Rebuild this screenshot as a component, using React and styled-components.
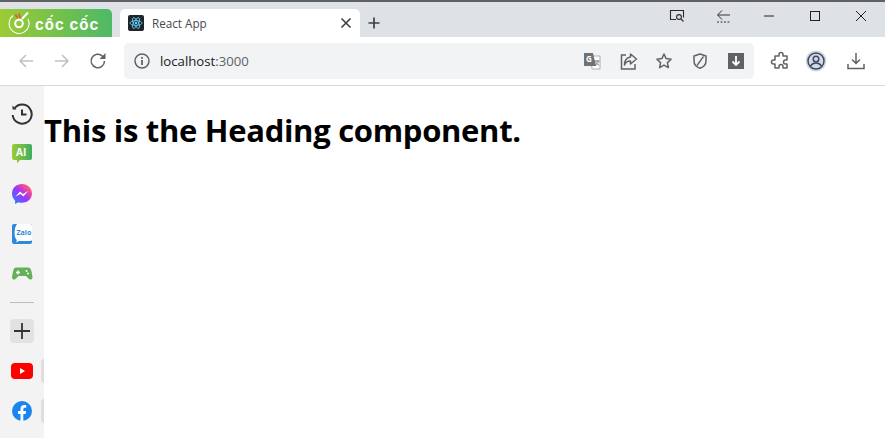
import React from "react";
import styled, { createGlobalStyle } from "styled-components";

const Global = createGlobalStyle`
  html, body { margin: 0; padding: 0; background: #fff; overflow: hidden; }
  * { box-sizing: border-box; }
`;
const Win = styled.div`
  width: 885px; height: 438px; display: flex; flex-direction: column; overflow: hidden;
  font-family: "Open Sans", "Noto Sans", sans-serif; background: #fff;
`;
const TitleBar = styled.div`
  height: 37px; flex: none; background: #dee1e6; border-top: 2px solid #5f6163;
  display: flex; align-items: flex-end; position: relative;
`;
const Brand = styled.div`
  width: 112px; height: 28px; border-radius: 0 5px 0 0; flex: none;
  background: linear-gradient(90deg, #9ccb35 0%, #6cc04f 60%, #4eb968 100%);
  display: flex; align-items: center; padding-left: 7px; gap: 4px; color: #fff;
`;
const BrandText = styled.span`
  font: 700 15px/1 Inter, sans-serif; letter-spacing: 1px; margin-top: 3px; white-space: nowrap;
`;
const Tab = styled.div`
  width: 240px; height: 28px; margin-left: 8px; background: #fff; border-radius: 5px 5px 0 0;
  display: flex; align-items: center; padding: 0 7px 0 8px; flex: none;
`;
const Favicon = styled.div`
  width: 16px; height: 16px; background: #20232a; border-radius: 2px; display: flex;
  align-items: center; justify-content: center; flex: none;
`;
const TabTitle = styled.span`
  font: 400 11.7px "Open Sans", sans-serif; color: #45484c; margin-left: 8px; flex: 1;
`;
const NewTab = styled.div`
  width: 28px; height: 28px; display: flex; align-items: center; justify-content: center;
`;
const Spacer = styled.div` flex: 1; `;
const WinControls = styled.div`
  display: flex; align-self: flex-start; align-items: center; height: 27px; padding-right: 1px;
`;
const WinBtn = styled.div`
  width: 46px; display: flex; align-items: center; justify-content: center; height: 27px;
`;
const Toolbar = styled.div`
  height: 49px; flex: none; background: #fff; border-bottom: 1px solid #d8d9db;
  display: flex; align-items: center; padding-left: 8px;
`;
const NavBtn = styled.div`
  width: 36px; height: 36px; display: flex; align-items: center; justify-content: center; flex: none;
  margin-left: ${p => p.$ml || 0}px;
`;
const Omni = styled.div`
  width: 630px; height: 36px; margin-left: 8px; background: #f1f3f4; border-radius: 5px; flex: none;
  display: flex; align-items: center; padding-left: 9px;
`;
const Url = styled.span`
  font: 400 13.2px "Open Sans", sans-serif; color: #202124; margin-left: 9px; flex: 1;
  & > i { font-style: normal; color: #5f6368; }
`;
const OmniIcon = styled.div`
  width: 36px; height: 36px; display: flex; align-items: center; justify-content: center; flex: none;
`;
const Main = styled.div` flex: 1; display: flex; min-height: 0; `;
const Sidebar = styled.aside`
  width: 44px; flex: none; background: #f3f3f3; display: flex; flex-direction: column; align-items: center;
  padding-top: 8px; position: relative;
`;
const SideItem = styled.div`
  height: 40px; width: 44px; display: flex; align-items: center; justify-content: center; flex: none;
`;
const Divider = styled.div` width: 24px; height: 1px; background: #bdbdbd; margin: 8px 0 16px; flex: none; `;
const AddBtn = styled.div`
  width: 24px; height: 24px; background: #e2e2e2; border-radius: 4px; display: flex; align-items: center; justify-content: center;
  flex: none; margin-bottom: 8px;
`;
const Peek = styled.div`
  position: absolute; left: 41px; width: 3px; height: 24px; background: #dedede; border-radius: 3px 0 0 3px; top: ${p => p.$top}px;
`;
const Content = styled.main` flex: 1; padding: 23px 0 0 0; `;
const Heading = styled.h1`
  margin: 0; font: 700 31px/42px "Open Sans", sans-serif; color: #000; letter-spacing: -.3px; white-space: nowrap;
`;
const ZaloText = styled.text`
  font: 700 7px "Open Sans", sans-serif; fill: #2d8ad8;
`;
const AiText = styled.text`
  font: 700 10px "Open Sans", sans-serif; fill: #fff;
`;
const TranslateG = styled.text`
  font: 700 8px "Open Sans", sans-serif; fill: #fff;
`;

const G = "#5f6368";
const Ico = ({ size = 20, children, vb = 20 }) => (
  <svg width={size} height={size} viewBox={`0 0 ${vb} ${vb}`} fill="none">{children}</svg>
);

export default function App() {
  return (
    <Win>
      <Global />
      <TitleBar>
        <Brand>
          <svg width="24" height="24" viewBox="0 0 24 24" fill="none">
            <path d="M6 4.500A10 10 0 1 0 21 8" stroke="#fff" strokeWidth="1.100" />
            <circle cx="12" cy="12.500" r="3.800" stroke="#fff" strokeWidth="2" />
            <path d="M12 2.500l1 4.500M8.500 3.500L10.500 7" stroke="#f0532d" strokeWidth="1.600" />
            <path d="M21 1.500L15 8" stroke="#fff" strokeWidth="2" />
          </svg>
          <BrandText>cốc cốc</BrandText>
        </Brand>
        <Tab>
          <Favicon>
            <svg width="14" height="14" viewBox="0 0 14 14" fill="none" stroke="#61dafb" strokeWidth=".8">
              <circle cx="7" cy="7" r="1.200" fill="#61dafb" stroke="none" />
              <ellipse cx="7" cy="7" rx="6" ry="2.400" />
              <ellipse cx="7" cy="7" rx="6" ry="2.400" transform="rotate(60 7 7)" />
              <ellipse cx="7" cy="7" rx="6" ry="2.400" transform="rotate(120 7 7)" />
            </svg>
          </Favicon>
          <TabTitle>React App</TabTitle>
          <Ico size={14} vb={14}><path d="M2.500 2.500l9 9M11.500 2.500l-9 9" stroke="#3c4043" strokeWidth="1.600" /></Ico>
        </Tab>
        <NewTab>
          <Ico size={14} vb={14}><path d="M7 1.500v11M1.500 7h11" stroke="#3c4043" strokeWidth="1.700" /></Ico>
        </NewTab>
        <Spacer />
        <WinControls>
          <WinBtn>
            <Ico size={18} vb={18}>
              <path d="M8 12.500H2.500v-9h13v7" stroke="#2b2b2b" strokeWidth="1.100" />
              <circle cx="11" cy="10" r="2.400" stroke="#2b2b2b" strokeWidth="1.100" />
              <path d="M13 12l2.500 2.500" stroke="#2b2b2b" strokeWidth="1.100" />
            </Ico>
          </WinBtn>
          <WinBtn>
            <Ico size={16} vb={16}>
              <path d="M15 7H3M7 2.500L2.500 7 7 11.500" stroke="#333" strokeWidth="1" />
              <path d="M2 14h13" stroke="#333" strokeWidth="1" strokeDasharray="2 1.500" />
            </Ico>
          </WinBtn>
          <WinBtn>
            <Ico size={12} vb={12}><path d="M1 6h10" stroke="#222" strokeWidth="1" /></Ico>
          </WinBtn>
          <WinBtn>
            <Ico size={12} vb={12}><rect x="1.500" y="1.500" width="9" height="9" stroke="#222" strokeWidth="1" /></Ico>
          </WinBtn>
          <WinBtn>
            <Ico size={12} vb={12}><path d="M1 1l10 10M11 1L1 11" stroke="#222" strokeWidth="1" /></Ico>
          </WinBtn>
        </WinControls>
      </TitleBar>
      <Toolbar>
        <NavBtn>
          <Ico size={16} vb={16}><path d="M15 8H2M8 2L2 8l6 6" stroke="#bdc1c6" strokeWidth="1.500" /></Ico>
        </NavBtn>
        <NavBtn>
          <Ico size={16} vb={16}><path d="M1 8h13M8 2l6 6-6 6" stroke="#bdc1c6" strokeWidth="1.500" /></Ico>
        </NavBtn>
        <NavBtn>
          <Ico size={18} vb={18}>
            <path d="M15.500 9a6.700 6.700 0 1 1-2-4.800L15.500 6.500" stroke={G} strokeWidth="1.500" />
            <path d="M16.500 1v6h-6z" fill={G} />
          </Ico>
        </NavBtn>
        <Omni>
          <Ico size={18} vb={18}>
            <circle cx="9" cy="9" r="7" stroke={G} strokeWidth="1.500" />
            <path d="M9 8v5M9 5v1.800" stroke={G} strokeWidth="1.800" />
          </Ico>
          <Url>localhost<i>:3000</i></Url>
          <OmniIcon>
            <Ico size={18} vb={18}>
              <path d="M8 4h9v13H9z" fill="#fff" stroke="#9a9da1" strokeWidth=".8" />
              <path d="M1 1h9l3 13H1z" fill="#6f7276" />
              <TranslateG x="3" y="10">G</TranslateG>
              <path d="M11.500 9h5M14 8v1M15.500 9c-.5 2-2 3.500-3.500 4.200M12.500 9.500c.5 1.500 2 3 3.500 3.700" stroke={G} strokeWidth=".8" />
            </Ico>
          </OmniIcon>
          <OmniIcon>
            <Ico size={19} vb={19}>
              <path d="M7 3H2.500v14h13.500v-5" stroke={G} strokeWidth="1.500" />
              <path d="M11.500 2l6 5-6 5V9C8.500 9 6.500 10 5.500 13c0-4.500 2.500-7.500 6-8z" stroke={G} strokeWidth="1.500" strokeLinejoin="round" />
            </Ico>
          </OmniIcon>
          <OmniIcon>
            <Ico size={18} vb={18}>
              <path d="M9 2l2.100 4.600 5 .6-3.700 3.400 1 5L9 13.100l-4.400 2.500 1-5L1.900 7.200l5-.6z" stroke={G} strokeWidth="1.500" strokeLinejoin="round" />
            </Ico>
          </OmniIcon>
          <OmniIcon>
            <Ico size={18} vb={18}>
              <path d="M9 2l6 2v5c0 3.500-2.500 6-6 7.200C5.500 15 3 12.500 3 9V4z" stroke={G} strokeWidth="1.500" strokeLinejoin="round" />
              <path d="M12.500 4.500L6 13.500" stroke={G} strokeWidth="1.300" />
            </Ico>
          </OmniIcon>
          <OmniIcon>
            <Ico size={18} vb={18}>
              <rect x="1" y="1" width="16" height="16" fill={G} />
              <path d="M9 4v9M5.500 9.500L9 13l3.500-3.500" stroke="#fff" strokeWidth="1.800" />
            </Ico>
          </OmniIcon>
        </Omni>
        <NavBtn $ml={8}>
          <Ico size={20} vb={20}>
            <path d="M8 3.500a2 2 0 0 1 4 0V5h4v4h-1.500a2 2 0 0 0 0 4H16v4h-4v-1.500a2 2 0 0 0-4 0V17H4v-4H2.500a2 2 0 0 1 0-4H4V5h4z" stroke={G} strokeWidth="1.500" strokeLinejoin="round" transform="translate(1 0)" />
          </Ico>
        </NavBtn>
        <NavBtn>
          <Ico size={22} vb={22}>
            <circle cx="11" cy="11" r="10.500" fill="#d3d9e6" />
            <circle cx="11" cy="11" r="8" stroke="#3f4a5e" strokeWidth="1.500" />
            <circle cx="11" cy="9" r="2.800" stroke="#3f4a5e" strokeWidth="1.500" />
            <path d="M5.500 16c1.500-2.500 3.500-3 5.500-3s4 .5 5.500 3" stroke="#3f4a5e" strokeWidth="1.500" />
          </Ico>
        </NavBtn>
        <NavBtn $ml={4}>
          <Ico size={20} vb={20}>
            <path d="M10 2v10M6 8.500l4 4 4-4" stroke={G} strokeWidth="1.500" />
            <path d="M2 13v4.500h16V13" stroke={G} strokeWidth="1.500" />
          </Ico>
        </NavBtn>
      </Toolbar>
      <Main>
        <Sidebar>
          <SideItem>
            <Ico size={22} vb={22}>
              <path d="M3.500 5.500A9.500 9.500 0 1 1 1.700 12" stroke="#333" strokeWidth="2" />
              <path d="M1.500 2.500v4h4z" fill="#333" />
              <path d="M11 6.500V11.500H15.500" stroke="#333" strokeWidth="2" />
            </Ico>
          </SideItem>
          <SideItem>
            <svg width="22" height="22" viewBox="0 0 22 22" fill="none">
              <defs>
                <linearGradient id="aig" x1="0" x2="1">
                  <stop offset="0" stopColor="#9ccb35" /><stop offset="1" stopColor="#3fae62" />
                </linearGradient>
              </defs>
              <path d="M3 1h16a2 2 0 0 1 2 2v12a2 2 0 0 1-2 2H9l-3 3v-3H3a2 2 0 0 1-2-2V3a2 2 0 0 1 2-2z" fill="url(#aig)" />
              <AiText x="5" y="13">AI</AiText>
            </svg>
          </SideItem>
          <SideItem>
            <svg width="22" height="22" viewBox="0 0 22 22" fill="none">
              <defs>
                <linearGradient id="msg" x1="0" y1="1" x2="1" y2="0">
                  <stop offset="0" stopColor="#1e8bff" /><stop offset=".5" stopColor="#a033ff" /><stop offset=".8" stopColor="#ff5280" /><stop offset="1" stopColor="#ff7061" />
                </linearGradient>
              </defs>
              <path d="M11 1C5.300 1 1 5.100 1 10.500c0 2.800 1.200 5.300 3.100 7V21l3.200-1.800c1.200.4 2.400.6 3.700.6 5.700 0 10-4.200 10-9.300S16.700 1 11 1z" fill="url(#msg)" />
              <path d="M4.500 13.500L9 8.500l3 2.500 5-3-4.500 5.500-3-2.500z" fill="#fff" />
            </svg>
          </SideItem>
          <SideItem>
            <svg width="22" height="22" viewBox="0 0 22 22" fill="none">
              <rect x="1" y="1" width="20" height="20" rx="2" fill="#2d8ad8" />
              <path d="M6 1h13a2 2 0 0 1 2 2v14a2 2 0 0 1-2 1H8l-3 1.500C6 18 6 17 5 16 3 13 3 5 6 1z" fill="#fff" />
              <ZaloText x="5.500" y="11.500">Zalo</ZaloText>
            </svg>
          </SideItem>
          <SideItem>
            <Ico size={22} vb={22}>
              <path d="M5 4.500h12c2 0 3 1.500 3.500 4l1 5.500c.3 2-2 3.500-3.500 2l-3-3H7.500l-3 3C3 17.500.7 16 1 14l1-5.500C2.500 6 3.500 4.500 5 4.500z" fill="#66b05a" />
              <path d="M5 9.500h4M7 7.500v4" stroke="#fff" strokeWidth="1.300" />
              <circle cx="15.500" cy="8" r="1" fill="#fff" /><circle cx="17" cy="10.500" r="1" fill="#fff" />
            </Ico>
          </SideItem>
          <Divider />
          <AddBtn>
            <Ico size={16} vb={16}><path d="M8 0v16M0 8h16" stroke="#333" strokeWidth="1.800" /></Ico>
          </AddBtn>
          <SideItem>
            <svg width="22" height="16" viewBox="0 0 22 16">
              <rect width="22" height="16" rx="4" fill="#f00" />
              <path d="M9 5v6l5-3z" fill="#fff" />
            </svg>
          </SideItem>
          <SideItem>
            <svg width="20" height="20" viewBox="0 0 20 20">
              <circle cx="10" cy="10" r="10" fill="#1a84f0" />
              <path d="M8.500 20v-7H6v-3h2.500V7.800c0-2.500 1.500-3.800 3.700-3.800.8 0 1.600.1 2 .2v2.500h-1.300c-1.200 0-1.600.7-1.600 1.500V10h2.800l-.5 3h-2.300v7z" fill="#fff" />
            </svg>
          </SideItem>
          <Peek $top={273} />
          <Peek $top={313} />
        </Sidebar>
        <Content>
          <Heading>This is the Heading component.</Heading>
        </Content>
      </Main>
    </Win>
  );
}
